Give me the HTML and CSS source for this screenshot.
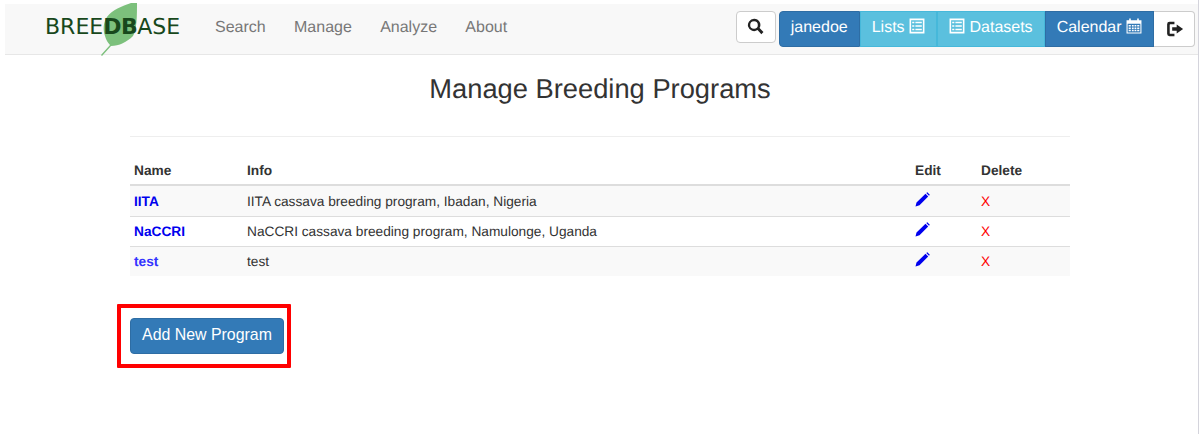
FILE: index.html
```html
<!DOCTYPE html>
<html lang="en">
<head>
  <meta charset="UTF-8" />
  <title>Manage Breeding Programs</title>
  <link rel="stylesheet" href="styles.css">
</head>
<body>
  <div class="page">
    <nav class="navbar">
      <a class="brand" href="#">
        <svg class="leaf" viewBox="0 0 40 54" width="40" height="54">
          <path d="M37 0 L31 0 C22 3 12 7 7 14 C3 20 3 27 5 33 C6 37 8 40 10 42 L1 52 L2 53 L11 43 C19 43 27 39 33 33 C37 27 37 12 37 0 Z" fill="#7cc07c"/>
        </svg>
        <span class="brand-text">BREE<b>DB</b>ASE</span>
      </a>
      <ul class="nav-links">
        <li><a href="#">Search</a></li>
        <li><a href="#">Manage</a></li>
        <li><a href="#">Analyze</a></li>
        <li><a href="#">About</a></li>
      </ul>
      <div class="nav-actions">
        <button class="btn-plain search-btn">
          <svg class="icon" viewBox="0 0 16 16" width="17" height="17"><path d="M6.600 0.800a5.800 5.800 0 1 0 3.300 10.600l3.600 3.800 2-2-3.700-3.700A5.800 5.800 0 0 0 6.600 0.800zm0 2.200a3.600 3.600 0 1 1 0 7.200 3.600 3.600 0 0 1 0-7.200z" fill="#222"/></svg>
        </button>
        <div class="btn-group">
          <a class="seg seg-blue seg-first" href="#">janedoe</a>
          <a class="seg seg-info" href="#">Lists
            <svg class="icon" viewBox="0 0 15 15" width="16" height="16"><path fill-rule="evenodd" d="M0.500 0.500h14v14h-14zM2 2v11h11V2zM3 3.500h2V5H3zM6 3.500h6V5H6zM3 6.700h2v1.500H3zM6 6.700h6v1.500H6zM3 10h2v1.500H3zM6 10h6v1.500H6z" fill="#fff"/></svg>
          </a>
          <a class="seg seg-info" href="#">
            <svg class="icon" viewBox="0 0 15 15" width="16" height="16"><path fill-rule="evenodd" d="M0.500 0.500h14v14h-14zM2 2v11h11V2zM3 3.500h2V5H3zM6 3.500h6V5H6zM3 6.700h2v1.500H3zM6 6.700h6v1.500H6zM3 10h2v1.500H3zM6 10h6v1.500H6z" fill="#fff"/></svg>
            Datasets</a>
          <a class="seg seg-blue" href="#">Calendar
            <svg class="icon" viewBox="0 0 15 15" width="16" height="16"><path fill-rule="evenodd" d="M3 0.500h1.500V2h6V0.500H12V2h2.500v12.500H0.500V2H3zM1.500 5.500v8h12v-8zM2.500 6.500h2V8h-2zM5.500 6.500h1.700V8H5.500zM8 6.500h1.700V8H8zM10.500 6.500h2V8h-2zM2.500 8.800h2v1.500h-2zM5.500 8.800h1.700v1.500H5.500zM8 8.800h1.700v1.500H8zM10.500 8.800h2v1.500h-2zM2.500 11h2v1.500h-2zM5.500 11h1.700v1.500H5.500zM8 11h1.700v1.500H8zM10.500 11h2v1.500h-2z" fill="#fff"/></svg>
          </a>
          <a class="seg seg-logout" href="#">
            <svg class="icon" viewBox="0 0 16 16" width="18" height="18"><path d="M7.500 1.500H3.200A2.200 2.200 0 0 0 1 3.700v8.600a2.200 2.200 0 0 0 2.200 2.200h4.300v-2.300H3.800a.5.500 0 0 1-.5-.5V4.300a.5.500 0 0 1 .5-.5h3.700zM9.500 4v2.500H5.500v3h4V12l5.700-4z" fill="#222"/></svg>
          </a>
        </div>
      </div>
    </nav>

    <main class="content">
      <h2 class="title">Manage Breeding Programs</h2>
      <hr class="rule">
      <table class="programs">
        <thead>
          <tr><th class="col-name">Name</th><th>Info</th><th class="col-edit">Edit</th><th class="col-del">Delete</th></tr>
        </thead>
        <tbody>
          <tr>
            <td><a class="prog-link" href="#">IITA</a></td>
            <td>IITA cassava breeding program, Ibadan, Nigeria</td>
            <td><svg class="pencil" viewBox="0 0 15 15" width="15" height="15"><path d="M0.500 14.500 L1.500 10.500 L10.500 1.800 L13.200 4.500 L4.500 13.300 Z M11.300 1 L12.300 0.200 L14.800 2.800 L14 3.700 Z" fill="#0000ee"/></svg></td>
            <td><a class="del-link" href="#">X</a></td>
          </tr>
          <tr>
            <td><a class="prog-link" href="#">NaCCRI</a></td>
            <td>NaCCRI cassava breeding program, Namulonge, Uganda</td>
            <td><svg class="pencil" viewBox="0 0 15 15" width="15" height="15"><path d="M0.500 14.500 L1.500 10.500 L10.500 1.800 L13.200 4.500 L4.500 13.300 Z M11.300 1 L12.300 0.200 L14.800 2.800 L14 3.700 Z" fill="#0000ee"/></svg></td>
            <td><a class="del-link" href="#">X</a></td>
          </tr>
          <tr>
            <td><a class="prog-link prog-visited" href="#">test</a></td>
            <td>test</td>
            <td><svg class="pencil" viewBox="0 0 15 15" width="15" height="15"><path d="M0.500 14.500 L1.500 10.500 L10.500 1.800 L13.200 4.500 L4.500 13.300 Z M11.300 1 L12.300 0.200 L14.800 2.800 L14 3.700 Z" fill="#0000ee"/></svg></td>
            <td><a class="del-link" href="#">X</a></td>
          </tr>
        </tbody>
      </table>
      <div class="highlight">
        <button class="btn-primary">Add New Program</button>
      </div>
    </main>
  </div>
</body>
</html>
```

FILE: styles.css
```css
* { box-sizing: border-box; }
html, body { height: 100%; }
body {
  margin: 0;
  font-family: "Liberation Sans", Arial, sans-serif;
  font-size: 13.7px;
  line-height: 20px;
  color: #333;
  background: #fff;
  overflow: hidden;
  text-rendering: geometricPrecision;
}
a { text-decoration: none; }
.page {
  width: 1199px;
  height: 100%;
  padding: 4px 0 0 5px;
  border-right: 1px solid #d4d4dc;
}

.navbar {
  display: flex;
  align-items: center;
  height: 51px;
  background: #f8f8f8;
  border-bottom: 1px solid #e7e7e7;
}
.brand {
  position: relative;
  display: block;
  margin-left: 40px;
  width: 136px;
  margin-top: -2px;
}
.brand-text {
  position: relative;
  font-family: "DejaVu Sans", sans-serif;
  font-size: 22px;
  line-height: 30px;
  color: #18481c;
}
.brand-text b { font-weight: bold; letter-spacing: -0.5px; }
.leaf {
  position: absolute;
  left: 55px;
  top: -10px;
}
.nav-links {
  display: flex;
  gap: 28.3px;
  list-style: none;
  margin: -2px 0 0 34px;
  padding: 0;
  font-size: 16px;
}
.nav-links a { color: #777; }

.nav-actions {
  display: flex;
  align-items: flex-start;
  margin-left: auto;
  margin-right: 3px;
  gap: 3px;
  height: 36px;
}
.icon { vertical-align: -2px; }
.btn-plain {
  width: 40px;
  height: 32px;
  padding: 0;
  background: #fff;
  border: 1px solid #ccc;
  border-radius: 4px;
}
.btn-group { display: flex; }
.seg {
  display: block;
  height: 36px;
  padding: 6px 11px 0;
  font-size: 16px;
  color: #fff;
  border: 1px solid transparent;
}
.seg-blue { background: #337ab7; border-color: #2e6da4; }
.seg-info { background: #5bc0de; border-color: #46b8da; }
.seg-first { border-radius: 4px 0 0 4px; }
.seg-logout {
  width: 41px;
  height: 36px;
  background: #fff;
  border-color: #ccc;
  border-left: 0;
  border-radius: 0 4px 4px 0;
  padding: 8px 0 0 12px;
}

.content { width: 940px; margin-left: 125px; }
.title {
  margin: 14px 0 31px;
  height: 36px;
  font-size: 27.3px;
  line-height: 40px;
  font-weight: 400;
  text-align: center;
}
.rule {
  margin: 0 0 18px;
  border: 0;
  border-top: 1px solid #eee;
}
.programs {
  width: 100%;
  border-collapse: separate;
  border-spacing: 0;
}
.programs th {
  text-align: left;
  padding: 6px 4px 3px;
  border-bottom: 2px solid #ddd;
}
.programs td {
  padding: 5px 4px 4px;
  border-top: 1px solid #ddd;
}
.programs tbody tr:first-child td { padding-top: 6px; border-top: 0; }
.programs tbody tr:nth-child(odd) { background: #f9f9f9; }
.col-name { width: 113px; }
.col-edit { width: 66px; }
.col-del { width: 93px; }
.prog-link { color: #00e; font-weight: bold; }
.prog-visited { color: #33f; }
.del-link { color: #f00; }
.pencil { display: block; margin-top: -5px; }

.highlight {
  display: inline-block;
  margin: 28px 0 0 -13px;
  padding: 10px 3px 10px 9px;
  border: 4px solid #f00;
  border-radius: 1px;
}
.btn-primary {
  display: block;
  width: 154px;
  height: 36px;
  padding: 0 0 2px;
  font-family: inherit;
  font-size: 15.9px;
  color: #fff;
  background: #337ab7;
  border: 1px solid #2e6da4;
  border-radius: 4px;
}
```
